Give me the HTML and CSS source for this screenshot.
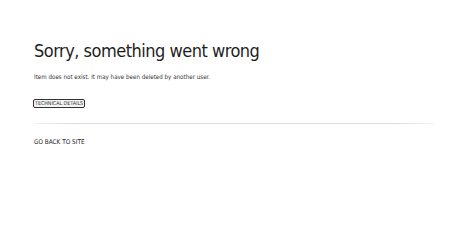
FILE: index.html
```html
<!DOCTYPE html>
<html>
<head>
<meta charset="utf-8">
<link rel="stylesheet" href="styles.css">
</head>
<body>
<main class="page">
  <h1 class="title">Sorry, something went wrong</h1>
  <p class="message">Item does not exist. It may have been deleted by another user.</p>
  <button class="details">TECHNICAL DETAILS</button>
  <hr class="divider">
  <a class="back" href="#">GO BACK TO SITE</a>
</main>
</body>
</html>
```
FILE: styles.css
```css
html, body {
  margin: 0;
  padding: 0;
  background: #ffffff;
}
body {
  font-family: "DejaVu Sans Condensed", "DejaVu Sans", Verdana, sans-serif;
  color: #222;
}
.page {
  display: flex;
  flex-direction: column;
  align-items: flex-start;
  padding: 40px 40px 0 34px;
}
.title {
  margin: 0;
  font-weight: normal;
  font-size: 18px;
  letter-spacing: -0.5px;
  color: #1e1e1e;
  line-height: 22px;
}
.message {
  margin: 11px 0 0 0;
  font-size: 6.2px;
  line-height: 8px;
  color: #333;
}
.details {
  margin: 18px 0 0 -1px;
  font-family: "DejaVu Sans Condensed", "DejaVu Sans", Verdana, sans-serif;
  font-size: 5.3px;
  line-height: 5px;
  padding: 1px 1px;
  border: 1px solid #333;
  border-radius: 2px;
  background: #f4f4f4;
  color: #333;
}
.divider {
  align-self: stretch;
  margin: 15px 0 0 0;
  border: 0;
  height: 1px;
  background: linear-gradient(to right, #f2f2f2, #dcdcdc 10%, #dcdcdc 90%, #f2f2f2);
}
.back {
  margin-top: 14px;
  font-size: 6.4px;
  line-height: 8px;
  color: #222;
  text-decoration: none;
}
```
